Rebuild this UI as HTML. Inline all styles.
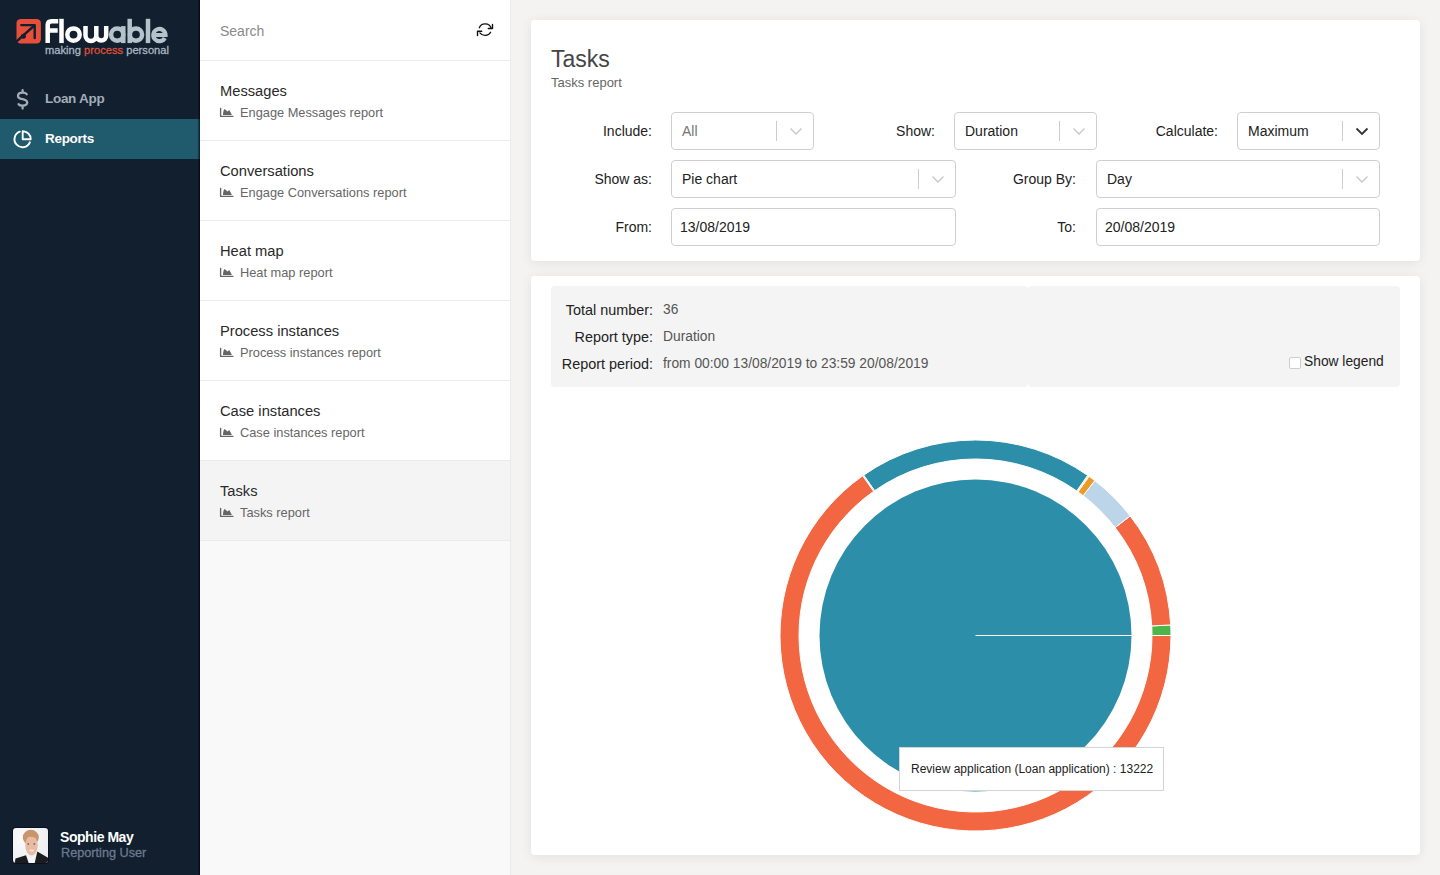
<!DOCTYPE html>
<html><head><meta charset="utf-8">
<style>
*{box-sizing:border-box;margin:0;padding:0}
html,body{width:1440px;height:875px;overflow:hidden;background:#f4f3f1;font-family:"Liberation Sans",sans-serif}
.abs{position:absolute}
#side{position:absolute;left:0;top:0;width:200px;height:875px;background:#121f2e}
#side .edge{position:absolute;left:197px;top:0;width:3px;height:875px;z-index:2;background:linear-gradient(90deg,rgba(40,50,60,0.12) 0,rgba(40,50,60,0.12) 1px,rgba(0,0,20,0.35) 1px,rgba(0,0,20,0.35) 2px,rgba(0,0,25,0.6) 2px)}
.nav{position:absolute;left:0;width:200px;height:40px}
.nav.active{background:#1f5b6d}
.nav .lbl{position:absolute;left:45px;top:11.7px;font-size:13.5px;letter-spacing:-0.3px;font-weight:bold;color:#a3adb7;line-height:16px;white-space:nowrap}
.nav.active .lbl{color:#fff}
#mid{position:absolute;left:200px;top:0;width:311px;height:875px;background:#f9f9f9;border-right:1px solid #e6ebee}
.srch{position:absolute;left:0;top:0;width:310px;height:61px;background:#fff;border-bottom:1px solid #e8ecee}
.srch .t{position:absolute;left:20px;top:23px;font-size:14px;color:#8a8a8a;line-height:16px}
.item{position:absolute;left:0;width:310px;height:80px;background:#fff;border-bottom:1px solid #e8ecee}
.item.sel{background:#f4f4f4}
.item .t{position:absolute;left:20px;top:22px;font-size:14.7px;color:#2a2a2a;line-height:17px;white-space:nowrap}
.item .s{position:absolute;left:40px;top:44px;font-size:12.8px;color:#666;line-height:15px;white-space:nowrap}
.item svg{position:absolute;left:19px;top:46px}
.card{position:absolute;background:#fff;border-radius:4px;box-shadow:0 2px 12px rgba(0,0,0,0.075)}
.lab{position:absolute;font-size:14px;color:#222;line-height:16px;text-align:right;white-space:nowrap}
.box{position:absolute;border:1px solid #cfcfcf;border-radius:4px;background:#fff}
.box .v{position:absolute;left:10px;top:10px;font-size:14px;color:#222;line-height:16px;white-space:nowrap}
.box .sep{position:absolute;top:8px;width:1px;height:20px;background:#ccc}
.box svg{position:absolute;top:13px}
.info .l{position:absolute;font-size:14.4px;color:#222;line-height:16px;text-align:right;white-space:nowrap}
.info .r{position:absolute;font-size:13.8px;color:#555;line-height:16px;white-space:nowrap}
</style></head><body>
<div id="side">
  <div class="edge"></div>
  <!-- logo -->
  <svg class="abs" style="left:0;top:0" width="200" height="62" viewBox="0 0 200 62">
    <rect x="16.5" y="18.9" width="24.4" height="24.6" rx="4.2" fill="#e84f3b"/>
    <path d="M21.3 25.1H34.7V38" stroke="#121f2e" stroke-width="2.4" fill="none" stroke-linecap="round" stroke-linejoin="round"/>
    <path d="M34.5 25.4L15.2 42.6" stroke="#121f2e" stroke-width="2.6" fill="none"/>
    <circle cx="23.4" cy="36.2" r="2.5" fill="#121f2e"/>
    <g fill="none" stroke-width="4.5">
      <g stroke="#ffffff">
        <path d="M47.7 43.1V25Q47.7 21.2 51.5 21.2H58.2M47.7 30.6H57.7"/>
        <path d="M61.5 18.8V43.1"/>
        <circle cx="73.5" cy="34.6" r="6.2"/>
        <path d="M85.5 26.1V35.6A5.4 5.4 0 0 0 96.3 35.6V26.1M96.3 35.6A4.95 4.95 0 0 0 106.2 35.6V26.1"/>
      </g>
      <g stroke="#b3c2cb">
        <circle cx="117.2" cy="34.6" r="6.1"/>
        <path d="M123.3 26.1V43.1"/>
        <path d="M129.7 18.8V43.1"/>
        <circle cx="136" cy="34.6" r="6.1"/>
        <path d="M148 18.8V43.1"/>
        <path d="M153.3 35H165.5A6.1 6.1 0 1 0 164.8 37.9" stroke-width="4.2"/>
      </g>
    </g>
    <text x="45" y="53.7" font-family="Liberation Sans" font-weight="normal" font-size="11.5" fill="#a9b8c2" stroke="#a9b8c2" stroke-width="0.3" textLength="124" lengthAdjust="spacingAndGlyphs">making <tspan fill="#de4f3d" stroke="#de4f3d">process</tspan> personal</text>
  </svg>
  <div class="nav" style="top:79px">
    <svg class="abs" style="left:0;top:0" width="40" height="40" viewBox="0 79 40 40"><path d="M26.7 94.2C26 93.2 24.5 92.7 22.6 92.7C20 92.7 18 94 18 96C18 98.2 20.5 98.8 22.6 99.2C24.8 99.6 27.2 100.4 27.2 102.6C27.2 104.6 25 105.6 22.6 105.6C20.6 105.6 19.2 105 18.6 104.2M22.6 90.2V92.7M22.6 105.6V108.5" stroke="#a3adb7" stroke-width="2.3" fill="none" stroke-linecap="round"/></svg>
    <div class="lbl">Loan App</div>
  </div>
  <div class="nav active" style="top:119px">
    <svg class="abs" style="left:0;top:0" width="40" height="40" viewBox="0 0 40 40"><path d="M19.76 12.68A8 8 0 1 0 29.86 23.33" stroke="#fff" stroke-width="1.9" fill="none" stroke-linecap="round"/><path d="M22.7 12.2V20.2H30.7A8 8 0 0 0 22.7 12.2Z" stroke="#fff" stroke-width="1.9" fill="none" stroke-linejoin="round"/></svg>
    <div class="lbl">Reports</div>
  </div>
  <!-- user -->
  <div class="abs" style="left:12px;top:827px;width:37px;height:37px;border-radius:4px;background:#0a0f22"></div>
  <svg class="abs" style="left:13px;top:828px" width="35" height="35" viewBox="0 0 35 35">
    <defs><clipPath id="av"><rect width="35" height="35" rx="3"/></clipPath>
    <radialGradient id="bgav" cx="0.3" cy="0.3" r="0.9"><stop offset="0" stop-color="#fbfbfc"/><stop offset="1" stop-color="#e9ebef"/></radialGradient></defs>
    <g clip-path="url(#av)">
      <rect width="35" height="35" fill="url(#bgav)"/>
      <ellipse cx="17.8" cy="9.5" rx="8" ry="7.8" fill="#c9966c"/>
      <ellipse cx="18.5" cy="17.5" rx="6.2" ry="10" fill="#e8bba2"/>
      <path d="M11.5 10Q18 7 25 11L25 8Q18 3 11 8Z" fill="#c9966c"/>
      <circle cx="15.3" cy="16" r="0.9" fill="#7a6c70"/><circle cx="21.3" cy="16" r="0.9" fill="#7a6c70"/>
      <ellipse cx="18.8" cy="22.5" rx="2.4" ry="1.1" fill="#f4e3dc"/>
      <path d="M12 36L13 27.5L18.5 30.5L24.5 24L26 36Z" fill="#f4f4f4"/>
      <path d="M1.5 36L2.5 30.5L13 27.2L16 36Z" fill="#1c1b1e"/>
      <path d="M21.5 36L24.3 23.5L35.5 30L35.5 36Z" fill="#1c1b1e"/>
    </g>
  </svg>
  <div class="abs" style="left:60px;top:828.5px;font-size:14px;letter-spacing:-0.45px;font-weight:bold;color:#fff;line-height:16px;white-space:nowrap">Sophie May</div>
  <div class="abs" style="left:61px;top:846px;font-size:12.7px;color:#6c7a8e;-webkit-text-stroke:0.3px #6c7a8e;line-height:15px;white-space:nowrap">Reporting User</div>
</div>

<div id="mid">
  <div class="srch"><div class="t">Search</div>
    <svg class="abs" style="left:276px;top:21px" width="18" height="18" viewBox="0 0 18 18">
      <path d="M3.3 6.7A6.4 6.4 0 0 1 15.2 7.2" stroke="#111" stroke-width="1.3" fill="none" stroke-linecap="round"/>
      <path d="M16.5 3.4V7.5H12.3" stroke="#111" stroke-width="1.4" fill="none" stroke-linecap="round" stroke-linejoin="round"/>
      <path d="M14.6 11.2A6.4 6.4 0 0 1 3.9 11.9" stroke="#111" stroke-width="1.3" fill="none" stroke-linecap="round"/>
      <path d="M5.7 10.3H1.5V14.5" stroke="#111" stroke-width="1.4" fill="none" stroke-linecap="round" stroke-linejoin="round"/>
    </svg>
  </div>
  <div class="item" style="top:61px;height:80px"><div class="t">Messages</div><svg width="15" height="12" viewBox="0 0 15 12"><path d="M1.6 1.5V9.4H13.9" stroke="#666" stroke-width="1.35" fill="none" stroke-linecap="round" stroke-linejoin="round"/><path d="M4 7.9C4 5.2 4.6 2.6 5.7 1.9L8.5 4.6L10.3 3.1L12.9 7.9Z" fill="#666"/></svg><div class="s">Engage Messages report</div></div>
  <div class="item" style="top:141px;height:80px"><div class="t">Conversations</div><svg width="15" height="12" viewBox="0 0 15 12"><path d="M1.6 1.5V9.4H13.9" stroke="#666" stroke-width="1.35" fill="none" stroke-linecap="round" stroke-linejoin="round"/><path d="M4 7.9C4 5.2 4.6 2.6 5.7 1.9L8.5 4.6L10.3 3.1L12.9 7.9Z" fill="#666"/></svg><div class="s">Engage Conversations report</div></div>
  <div class="item" style="top:221px;height:80px"><div class="t">Heat map</div><svg width="15" height="12" viewBox="0 0 15 12"><path d="M1.6 1.5V9.4H13.9" stroke="#666" stroke-width="1.35" fill="none" stroke-linecap="round" stroke-linejoin="round"/><path d="M4 7.9C4 5.2 4.6 2.6 5.7 1.9L8.5 4.6L10.3 3.1L12.9 7.9Z" fill="#666"/></svg><div class="s">Heat map report</div></div>
  <div class="item" style="top:301px;height:80px"><div class="t">Process instances</div><svg width="15" height="12" viewBox="0 0 15 12"><path d="M1.6 1.5V9.4H13.9" stroke="#666" stroke-width="1.35" fill="none" stroke-linecap="round" stroke-linejoin="round"/><path d="M4 7.9C4 5.2 4.6 2.6 5.7 1.9L8.5 4.6L10.3 3.1L12.9 7.9Z" fill="#666"/></svg><div class="s">Process instances report</div></div>
  <div class="item" style="top:381px;height:80px"><div class="t">Case instances</div><svg width="15" height="12" viewBox="0 0 15 12"><path d="M1.6 1.5V9.4H13.9" stroke="#666" stroke-width="1.35" fill="none" stroke-linecap="round" stroke-linejoin="round"/><path d="M4 7.9C4 5.2 4.6 2.6 5.7 1.9L8.5 4.6L10.3 3.1L12.9 7.9Z" fill="#666"/></svg><div class="s">Case instances report</div></div>
  <div class="item sel" style="top:461px;height:80px"><div class="t">Tasks</div><svg width="15" height="12" viewBox="0 0 15 12"><path d="M1.6 1.5V9.4H13.9" stroke="#666" stroke-width="1.35" fill="none" stroke-linecap="round" stroke-linejoin="round"/><path d="M4 7.9C4 5.2 4.6 2.6 5.7 1.9L8.5 4.6L10.3 3.1L12.9 7.9Z" fill="#666"/></svg><div class="s">Tasks report</div></div>
</div>

<!-- card 1 -->
<div class="card" style="left:531px;top:20px;width:889px;height:241px">
  <div class="abs" style="left:20px;top:25px;font-size:23px;color:#454545;line-height:28px">Tasks</div>
  <div class="abs" style="left:20px;top:55px;font-size:13px;color:#666;line-height:15px">Tasks report</div>
</div>
<div class="lab" style="right:788px;top:123px">Include:</div>
<div class="box" style="left:671px;top:112px;width:143px;height:38px"><div class="v" style="color:#777">All</div><div class="sep" style="left:104px"></div><svg style="left:117px" width="14" height="10" viewBox="0 0 14 10"><path d="M1.5 2.5L7 8L12.5 2.5" stroke="#c8c8c8" stroke-width="1.4" fill="none"/></svg></div>
<div class="lab" style="right:505px;top:123px">Show:</div>
<div class="box" style="left:954px;top:112px;width:143px;height:38px"><div class="v" style="color:#222">Duration</div><div class="sep" style="left:104px"></div><svg style="left:117px" width="14" height="10" viewBox="0 0 14 10"><path d="M1.5 2.5L7 8L12.5 2.5" stroke="#c8c8c8" stroke-width="1.4" fill="none"/></svg></div>
<div class="lab" style="right:222px;top:123px">Calculate:</div>
<div class="box" style="left:1237px;top:112px;width:143px;height:38px"><div class="v" style="color:#222">Maximum</div><div class="sep" style="left:104px"></div><svg style="left:117px" width="14" height="10" viewBox="0 0 14 10"><path d="M1.5 2.5L7 8L12.5 2.5" stroke="#333" stroke-width="1.8" fill="none"/></svg></div>
<div class="lab" style="right:788px;top:171px">Show as:</div>
<div class="box" style="left:671px;top:160px;width:285px;height:38px"><div class="v" style="color:#222">Pie chart</div><div class="sep" style="left:246px"></div><svg style="left:259px" width="14" height="10" viewBox="0 0 14 10"><path d="M1.5 2.5L7 8L12.5 2.5" stroke="#c8c8c8" stroke-width="1.4" fill="none"/></svg></div>
<div class="lab" style="right:364px;top:171px">Group By:</div>
<div class="box" style="left:1096px;top:160px;width:284px;height:38px"><div class="v" style="color:#222">Day</div><div class="sep" style="left:245px"></div><svg style="left:258px" width="14" height="10" viewBox="0 0 14 10"><path d="M1.5 2.5L7 8L12.5 2.5" stroke="#c8c8c8" stroke-width="1.4" fill="none"/></svg></div>
<div class="lab" style="right:788px;top:219px">From:</div>
<div class="box" style="left:671px;top:208px;width:285px;height:38px"><div class="v" style="left:8px">13/08/2019</div></div>
<div class="lab" style="right:364px;top:219px">To:</div>
<div class="box" style="left:1096px;top:208px;width:284px;height:38px"><div class="v" style="left:8px">20/08/2019</div></div>

<!-- card 2 -->
<div class="card" style="left:531px;top:276px;width:889px;height:579px"></div>
<div class="abs" style="left:551px;top:286px;width:477px;height:101px;background:#f4f4f4;border-radius:4px"></div><div class="abs" style="left:1028px;top:286px;width:372px;height:101px;background:#f4f4f4;border-radius:4px"></div>
<div class="info">
  <div class="l" style="right:787px;top:301.7px">Total number:</div><div class="r" style="left:663px;top:301.7px">36</div>
  <div class="l" style="right:787px;top:328.8px">Report type:</div><div class="r" style="left:663px;top:328.8px">Duration</div>
  <div class="l" style="right:787px;top:355.8px">Report period:</div><div class="r" style="left:663px;top:355.8px">from 00:00 13/08/2019 to 23:59 20/08/2019</div>
  <div class="abs" style="left:1289px;top:357px;width:12px;height:12px;border:1px solid #cdcdcd;border-radius:2px;background:#fff"></div>
  <div class="abs" style="left:1304px;top:354px;font-size:13.8px;color:#222;line-height:16px;white-space:nowrap">Show legend</div>
</div>

<svg class="abs" style="left:0;top:0" width="1440" height="875" viewBox="0 0 1440 875">
  <g stroke="#fff" stroke-width="1">
<path d="M1171.00,635.50A195.5,195.5 0 0 0 1170.71,624.93L1151.74,625.96A176.5,176.5 0 0 1 1152.00,635.50Z" fill="#4cb748"/>
<path d="M1170.71,624.93A195.5,195.5 0 0 0 1130.18,515.95L1115.15,527.57A176.5,176.5 0 0 1 1151.74,625.96Z" fill="#f26641"/>
<path d="M1130.18,515.95A195.5,195.5 0 0 0 1094.78,480.61L1083.19,495.66A176.5,176.5 0 0 1 1115.15,527.57Z" fill="#bdd5e8"/>
<path d="M1094.78,480.61A195.5,195.5 0 0 0 1089.03,476.34L1077.99,491.81A176.5,176.5 0 0 1 1083.19,495.66Z" fill="#ec9b2b"/>
<path d="M1089.03,476.34A195.5,195.5 0 0 0 1087.63,475.36L1076.74,490.92A176.5,176.5 0 0 1 1077.99,491.81Z" fill="#f6e9a6"/>
<path d="M1087.63,475.36A195.5,195.5 0 0 0 863.65,475.16L874.52,490.74A176.5,176.5 0 0 1 1076.74,490.92Z" fill="#2c8ea8"/>
<path d="M863.65,475.16A195.5,195.5 0 0 0 862.67,475.85L873.63,491.36A176.5,176.5 0 0 1 874.52,490.74Z" fill="#b5e0a0"/>
<path d="M862.67,475.85A195.5,195.5 0 1 0 1171.00,635.50L1152.00,635.50A176.5,176.5 0 1 1 873.63,491.36Z" fill="#f26641"/>

  </g>
  <circle cx="975.5" cy="635.5" r="156" fill="#2c8ea8"/>
  <line x1="975.5" y1="635.5" x2="1132" y2="635.5" stroke="#fff" stroke-width="1"/>
</svg>
<div class="abs" style="left:899px;top:747px;width:265px;height:44px;background:#fff;border:1px solid #d4d4d4"></div>
<div class="abs" style="left:911px;top:762px;font-size:12px;color:#222;line-height:14px;white-space:nowrap">Review application (Loan application) : 13222</div>
</body></html>
